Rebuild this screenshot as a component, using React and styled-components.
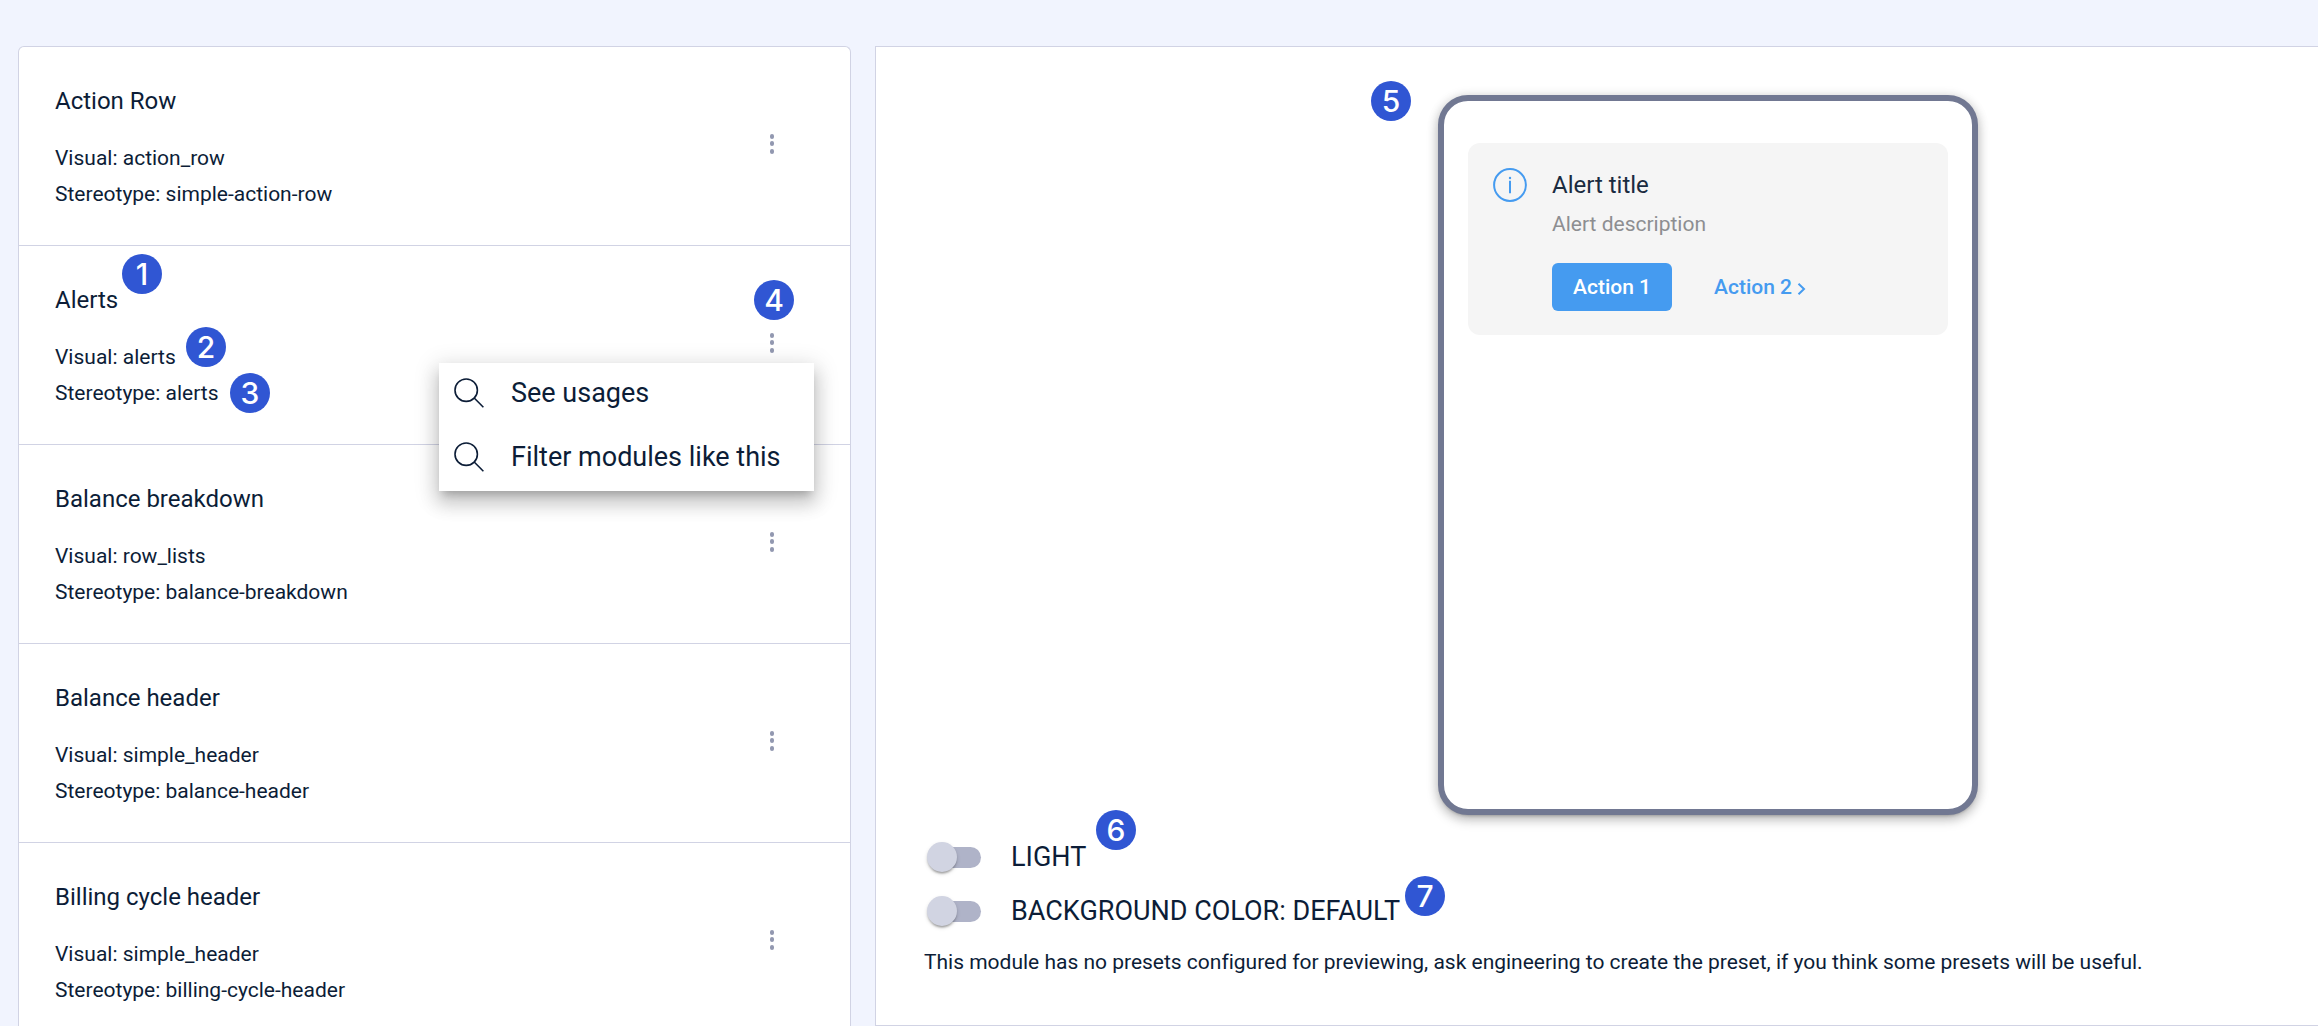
import React from "react";
import styled, { createGlobalStyle } from "styled-components";

const Global = createGlobalStyle`
  * { box-sizing: border-box; }
  body { margin: 0; background: #f1f4fe; color: #0c1d37; font-family: Roboto, sans-serif; }
`;

const Page = styled.div`
  display: flex;
  gap: 24px;
  height: 1026px;
  padding: 46px 0 0 18px;
  overflow: hidden;
`;

const ModuleList = styled.section`
  width: 833px;
  flex: none;
  background: #fff;
  border: 1px solid #d1d3e4;
  border-bottom: 0;
  border-radius: 6px 6px 0 0;
`;

const Row = styled.article`
  position: relative;
  display: flex;
  height: 199px;
  padding: 36px 70px 0 36px;
  border-bottom: 1px solid #d1d3e4;
`;

const RowText = styled.div`
  flex: 1;
`;

const RowTitle = styled.h2`
  margin: 0 0 21px;
  font-size: 24px;
  font-weight: 400;
  line-height: 36px;
`;

const RowMeta = styled.p`
  margin: 0;
  font-size: 21px;
  line-height: 36px;
`;

const KebabButton = styled.button`
  align-self: flex-start;
  display: flex;
  flex-direction: column;
  align-items: center;
  gap: 2.7px;
  width: 16px;
  margin-top: 51px;
  padding: 0;
  border: 0;
  background: none;
`;

const Dot = styled.span`
  width: 4.8px;
  height: 4.8px;
  border-radius: 50%;
  background: #9298b0;
`;

const Menu = styled.div`
  position: absolute;
  z-index: 2;
  top: 117px;
  left: 420px;
  width: 375px;
  height: 128px;
  background: #fff;
  box-shadow: 0 7px 8px -4px rgba(0, 0, 0, 0.2), 0 5px 22px 4px rgba(0, 0, 0, 0.12), 0 12px 17px 2px rgba(0, 0, 0, 0.14);
`;

const MenuItem = styled.div`
  display: flex;
  align-items: center;
  gap: 26px;
  height: 64px;
  padding: 0 0 4px 14px;
  font-size: 27px;
`;

const Badge = styled.span`
  position: absolute;
  z-index: 3;
  top: ${(p) => p.$y}px;
  left: ${(p) => p.$x}px;
  display: flex;
  align-items: center;
  justify-content: center;
  width: 40px;
  height: 40px;
  border-radius: 50%;
  background: #3056d3;
  color: #fff;
  font: 500 30px/40px Inter, sans-serif;
`;

const Preview = styled.section`
  position: relative;
  display: flex;
  flex: 1;
  flex-direction: column;
  padding: 48px 0 0 48px;
  background: #fff;
  border: 1px solid #d1d3e4;
  border-right: 0;
`;

const Phone = styled.div`
  align-self: flex-start;
  width: 540px;
  height: 720px;
  margin-left: 514px;
  padding: 42px 24px;
  border: 6px solid #717892;
  border-radius: 30px;
  background: #fff;
  box-shadow: 0 3px 3px -2px rgba(0, 0, 0, 0.2), 0 5px 12px rgba(0, 0, 0, 0.22), 0 1px 12px rgba(0, 0, 0, 0.12);
`;

const AlertCard = styled.div`
  display: flex;
  gap: 24px;
  height: 192px;
  padding: 24px;
  border-radius: 12px;
  background: #f5f5f5;
`;

const AlertBody = styled.div`
  display: flex;
  flex-direction: column;
`;

const AlertTitle = styled.h3`
  margin: 0;
  color: #1a2b40;
  font-size: 24px;
  font-weight: 400;
  line-height: 36px;
`;

const AlertText = styled.p`
  margin: 4px 0 0;
  color: #8d8e91;
  font-size: 21px;
  line-height: 34px;
`;

const Actions = styled.div`
  display: flex;
  align-items: center;
  gap: 42px;
  margin-top: 22px;
`;

const PrimaryAction = styled.button`
  width: 120px;
  height: 48px;
  padding: 0;
  border: 0;
  border-radius: 6px;
  background: #459bf0;
  color: #fff;
  font: 500 21px/48px Roboto, sans-serif;
`;

const LinkAction = styled.button`
  display: flex;
  align-items: center;
  gap: 5px;
  padding: 0;
  border: 0;
  background: none;
  color: #459bf0;
  font: 500 21px/48px Roboto, sans-serif;
`;

const Controls = styled.div`
  display: flex;
  flex-direction: column;
  margin-top: 15px;
`;

const ToggleRow = styled.label`
  display: flex;
  align-items: center;
  gap: 30px;
  height: 54px;
  font-size: 27px;
`;

const Track = styled.span`
  display: flex;
  align-items: center;
  width: 51px;
  height: 21px;
  margin-left: 6px;
  border-radius: 11px;
  background: #afb3c8;
`;

const Thumb = styled.span`
  flex: none;
  width: 30px;
  height: 30px;
  margin-left: -3.5px;
  border-radius: 50%;
  background: #d1d4e2;
  box-shadow: 0 3px 2px -2px rgba(0, 0, 0, 0.2), 0 2px 2px rgba(0, 0, 0, 0.14), 0 2px 4px rgba(0, 0, 0, 0.12);
`;

const Note = styled.p`
  margin: 6px 0 0;
  font-size: 21px;
  line-height: 36px;
  letter-spacing: -0.008px;
`;

const SearchIcon = () => (
  <svg width="32" height="32" viewBox="0 0 32 32" fill="none" stroke="#0c1d37" strokeWidth="1.6">
    <circle cx="13.2" cy="13.2" r="11.2" />
    <path d="M21.2 21 30.4 30.2" />
  </svg>
);

const InfoIcon = () => (
  <svg width="36" height="36" viewBox="0 0 36 36" fill="none" stroke="#459bf0">
    <circle cx="18" cy="18" r="15.9" strokeWidth="2" />
    <path d="M18 13.8v12.4" strokeWidth="2" />
    <circle cx="18" cy="11" r="1.2" fill="#459bf0" stroke="none" />
  </svg>
);

const Chevron = () => (
  <svg width="9" height="16" viewBox="0 0 9 16" fill="none" stroke="#459bf0" strokeWidth="2">
    <path d="M1.5 4.7 7 10 1.5 15.3" />
  </svg>
);

const modules = [
  { title: "Action Row", visual: "action_row", stereotype: "simple-action-row" },
  { title: "Alerts", visual: "alerts", stereotype: "alerts", open: true },
  { title: "Balance breakdown", visual: "row_lists", stereotype: "balance-breakdown" },
  { title: "Balance header", visual: "simple_header", stereotype: "balance-header" },
  { title: "Billing cycle header", visual: "simple_header", stereotype: "billing-cycle-header" },
];

const Toggle = ({ children }) => (
  <ToggleRow>
    <Track>
      <Thumb />
    </Track>
    {children}
  </ToggleRow>
);

const ModuleRow = ({ title, visual, stereotype, open }) => (
  <Row>
    <RowText>
      <RowTitle>{title}</RowTitle>
      <RowMeta>Visual: {visual}</RowMeta>
      <RowMeta>Stereotype: {stereotype}</RowMeta>
    </RowText>
    <KebabButton aria-label="Options">
      <Dot />
      <Dot />
      <Dot />
    </KebabButton>
    {open && (
      <>
        <Menu>
          <MenuItem><SearchIcon />See usages</MenuItem>
          <MenuItem><SearchIcon />Filter modules like this</MenuItem>
        </Menu>
        <Badge $x={103} $y={8}>1</Badge>
        <Badge $x={167} $y={81}>2</Badge>
        <Badge $x={211} $y={127}>3</Badge>
        <Badge $x={735} $y={34}>4</Badge>
      </>
    )}
  </Row>
);

export default function App() {
  return (
    <>
      <Global />
      <Page>
        <ModuleList>
          {modules.map((m) => (
            <ModuleRow key={m.title} {...m} />
          ))}
        </ModuleList>
        <Preview>
          <Phone>
            <AlertCard>
              <InfoIcon />
              <AlertBody>
                <AlertTitle>Alert title</AlertTitle>
                <AlertText>Alert description</AlertText>
                <Actions>
                  <PrimaryAction>Action 1</PrimaryAction>
                  <LinkAction>Action 2<Chevron /></LinkAction>
                </Actions>
              </AlertBody>
            </AlertCard>
          </Phone>
          <Controls>
            <Toggle>LIGHT</Toggle>
            <Toggle>BACKGROUND COLOR: DEFAULT</Toggle>
            <Note>
              This module has no presets configured for previewing, ask engineering to create the preset, if you think some presets will be useful.
            </Note>
          </Controls>
          <Badge $x={495} $y={34}>5</Badge>
          <Badge $x={220} $y={763}>6</Badge>
          <Badge $x={529} $y={828.5}>7</Badge>
        </Preview>
      </Page>
    </>
  );
}
